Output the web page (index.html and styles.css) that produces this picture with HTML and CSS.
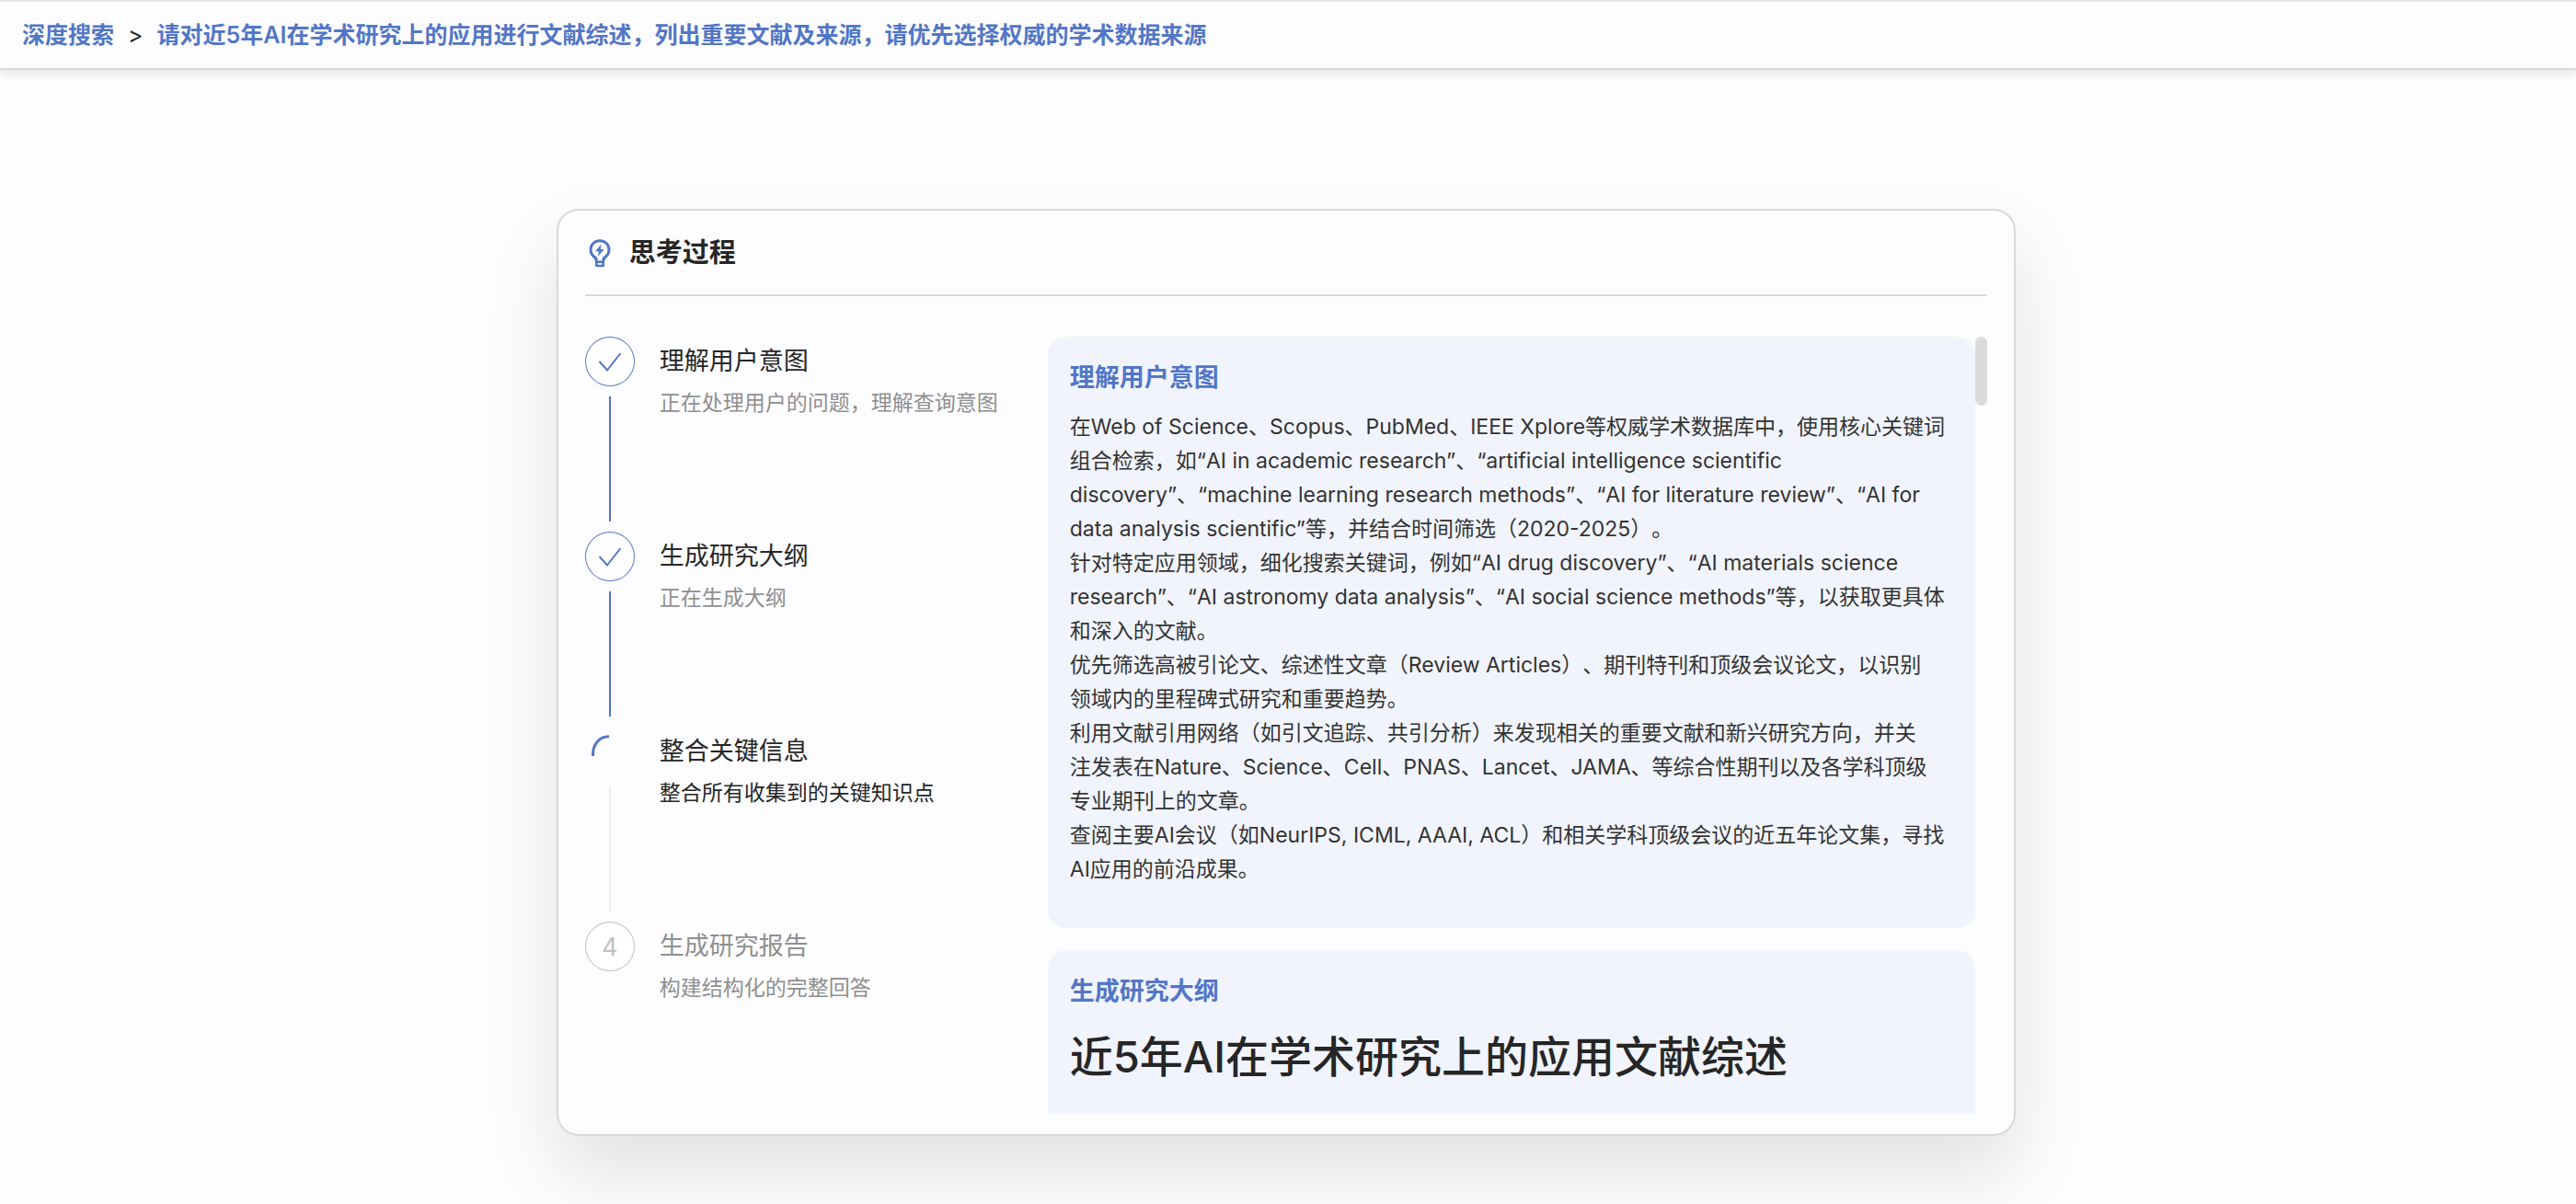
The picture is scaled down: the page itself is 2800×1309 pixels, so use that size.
FILE: index.html
```html
<!DOCTYPE html>
<html lang="en">
<head>
<meta charset="utf-8">
<meta name="viewport" content="width=device-width, initial-scale=1">
<title>深度搜索</title>
<link rel="stylesheet" href="styles.css">
</head>
<body>
<header class="topbar">
  <nav class="breadcrumb" aria-label="面包屑">
    <a href="#">深度搜索</a>
    <span class="breadcrumb-sep">&gt;</span>
    <a href="#">请对近5年AI在学术研究上的应用进行文献综述，列出重要文献及来源，请优先选择权威的学术数据来源</a>
  </nav>
</header>
<main class="page">
  <section class="card">
    <div class="card-head">
      <svg class="bulb" viewBox="0 0 32 32" aria-hidden="true">
        <path d="M11.500 24v-2.500C8.200 19.500 6 16.700 6 12.600 6 6.800 10.400 2.800 16 2.800s10 4 10 9.800c0 4.100-2.200 6.900-5.500 8.900V24" fill="none" stroke="currentColor" stroke-width="3"/>
        <path d="M12.300 22v8h7.400v-8M12 25.800h8" fill="none" stroke="currentColor" stroke-width="2.600" stroke-linejoin="round"/>
        <path d="M17.600 6.500l-6.600 7.700h3.800l-.8 5.500 6.800-7.700H16.700z" fill="currentColor"/>
      </svg>
      <h2 class="card-title">思考过程</h2>
    </div>
    <div class="card-body">
      <ol class="steps">
        <li class="step">
          <div class="step-rail">
            <span class="step-dot"><svg viewBox="0 0 54 54" aria-hidden="true"><path d="M15.500 27l8.500 9.500L38.500 18"/></svg></span>
            <span class="step-line"></span>
          </div>
          <div class="step-text"><h3>理解用户意图</h3><p>正在处理用户的问题，理解查询意图</p></div>
        </li>
        <li class="step">
          <div class="step-rail">
            <span class="step-dot"><svg viewBox="0 0 54 54" aria-hidden="true"><path d="M15.500 27l8.500 9.500L38.500 18"/></svg></span>
            <span class="step-line"></span>
          </div>
          <div class="step-text"><h3>生成研究大纲</h3><p>正在生成大纲</p></div>
        </li>
        <li class="step step-active">
          <div class="step-rail">
            <span class="step-dot"><svg viewBox="0 0 54 54" aria-hidden="true"><path d="M8.500 32C8 19 15.500 10.800 26 10.800"/></svg></span>
            <span class="step-line"></span>
          </div>
          <div class="step-text"><h3>整合关键信息</h3><p>整合所有收集到的关键知识点</p></div>
        </li>
        <li class="step step-waiting">
          <div class="step-rail"><span class="step-dot">4</span></div>
          <div class="step-text"><h3>生成研究报告</h3><p>构建结构化的完整回答</p></div>
        </li>
      </ol>
      <div class="results">
        <div class="results-scroll">
          <article class="panel">
            <h3 class="panel-title">理解用户意图</h3>
            <p>在Web of Science、Scopus、PubMed、IEEE Xplore等权威学术数据库中，使用核心关键词组合检索，如“AI in academic research”、“artificial intelligence scientific discovery”、“machine learning research methods”、“AI for literature review”、“AI for data analysis scientific”等，并结合时间筛选（2020-2025）。</p>
            <p>针对特定应用领域，细化搜索关键词，例如“AI drug discovery”、“AI materials science research”、“AI astronomy data analysis”、“AI social science methods”等，以获取更具体和深入的文献。</p>
            <p>优先筛选高被引论文、综述性文章（Review Articles）、期刊特刊和顶级会议论文，以识别<br>领域内的里程碑式研究和重要趋势。</p>
            <p>利用文献引用网络（如引文追踪、共引分析）来发现相关的重要文献和新兴研究方向，并关<br>注发表在Nature、Science、Cell、PNAS、Lancet、JAMA、等综合性期刊以及各学科顶级<br>专业期刊上的文章。</p>
            <p>查阅主要AI会议（如NeurIPS, ICML, AAAI, ACL）和相关学科顶级会议的近五年论文集，寻找AI应用的前沿成果。</p>
          </article>
          <article class="panel">
            <h3 class="panel-title">生成研究大纲</h3>
            <h1 class="outline-title">近5年AI在学术研究上的应用文献综述</h1>
          </article>
        </div>
        <div class="scroll-track"><div class="scroll-thumb"></div></div>
      </div>
    </div>
  </section>
</main>
</body>
</html>
```

FILE: styles.css
```css
:root {
  --blue: #5276c6;
  --ink: #262626;
  --muted: #8f8f8f;
  --line: #d9d9dc;
  --page: #fdfdff;
}

* { box-sizing: border-box; }

body {
  margin: 0;
  min-height: 100vh;
  background: var(--page);
  color: var(--ink);
  font-family: Inter, "Noto Sans CJK SC", sans-serif;
  font-size: 23px;
  text-spacing-trim: space-all;
  overflow: hidden;
}

h1, h2, h3, p, ol { margin: 0; padding: 0; }

.topbar {
  border-top: 2px solid #e5e5e8;
  border-bottom: 2px solid var(--line);
  box-shadow: 0 4px 10px rgba(0, 0, 0, .1);
  padding: 16px 24px;
}

.breadcrumb {
  display: flex;
  gap: 15px;
  font-size: 25px;
  line-height: 40px;
}

.breadcrumb a {
  color: var(--blue);
  font-weight: 600;
  text-decoration: none;
}

.page { padding: 151px 21.75% 0 21.6%; }

.card {
  display: flex;
  flex-direction: column;
  height: 77vh;
  padding: 0 29px 22px;
  border: 2px solid var(--line);
  border-radius: 24px;
  background: var(--page);
  box-shadow: 0 40px 80px rgba(0, 0, 0, .11);
}

.card-head {
  display: flex;
  align-items: center;
  gap: 16px;
  height: 93px;
  border-bottom: 2px solid var(--line);
}

.bulb {
  width: 32px;
  height: 32px;
  color: var(--blue);
}

.card-title {
  font-size: 29px;
  font-weight: 600;
  line-height: 40px;
}

.card-body {
  flex: 1;
  min-height: 0;
  display: grid;
  grid-template-columns: 33% 1fr;
  padding-top: 44px;
}

.steps { list-style: none; }

.step {
  display: flex;
  gap: 27px;
}

.step-rail {
  display: flex;
  flex-direction: column;
  align-items: center;
  gap: 11px;
  padding-bottom: 11px;
}

.step-dot {
  display: flex;
  align-items: center;
  justify-content: center;
  width: 54px;
  height: 54px;
  border-radius: 50%;
  box-shadow: inset 0 0 0 1px var(--blue);
  background: #fff;
  font-size: 27px;
}

.step-dot path {
  fill: none;
  stroke: var(--blue);
  stroke-width: 2;
}

.step-line {
  width: 2px;
  height: 136px;
  background: var(--blue);
}

.step-text h3 {
  font-size: 27px;
  font-weight: 400;
  line-height: 54px;
}

.step-text p {
  color: var(--muted);
  line-height: 36px;
}

.step-active .step-dot {
  background: none;
  box-shadow: none;
}

.step-active .step-dot path { stroke-width: 3; }
.step-active .step-line { background: #ececee; }
.step-active p { color: var(--ink); }

.step-waiting h3 { color: var(--muted); }

.step-waiting .step-dot {
  color: #bfbfbf;
  box-shadow: inset 0 0 0 1px #bfbfbf;
}

.results {
  display: flex;
  min-height: 0;
}

.results-scroll {
  flex: 1;
  display: flex;
  flex-direction: column;
  gap: 24px;
  overflow-y: auto;
  scrollbar-width: none;
}

.scroll-track { width: 13px; }

.scroll-thumb {
  height: 75px;
  border-radius: 7px;
  background: #dadada;
}

.panel {
  flex-shrink: 0;
  padding: 24px 24px 45px;
  border-radius: 20px;
  background: #f1f4fc;
}

.panel-title {
  margin-bottom: 14px;
  color: var(--blue);
  font-size: 27px;
  font-weight: 600;
  line-height: 42px;
}

.panel p {
  color: #333;
  line-height: 37px;
}

.outline-title {
  font-size: 47px;
  font-weight: 500;
  line-height: 72px;
}
```
